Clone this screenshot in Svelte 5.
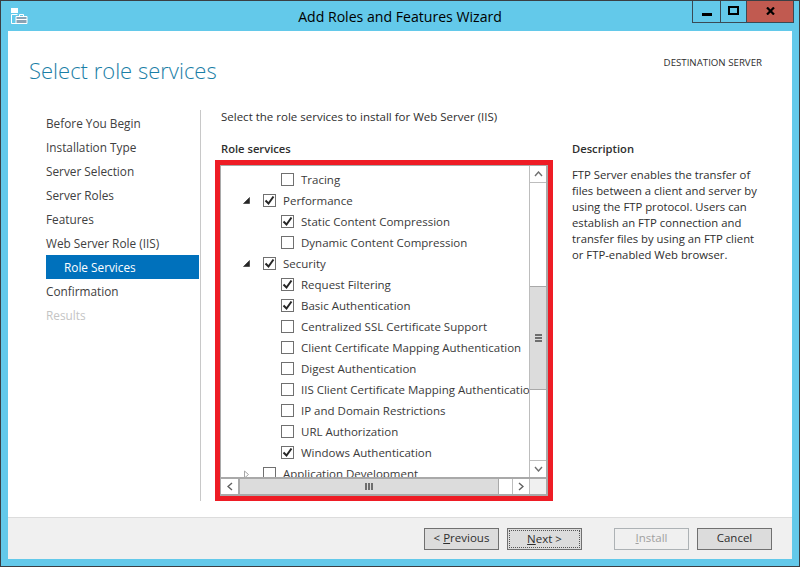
<script>
  const steps = [
    { label: 'Before You Begin' },
    { label: 'Installation Type' },
    { label: 'Server Selection' },
    { label: 'Server Roles' },
    { label: 'Features' },
    { label: 'Web Server Role (IIS)' },
    { label: 'Role Services', active: true },
    { label: 'Confirmation' },
    { label: 'Results', disabled: true }
  ];
  const rows = [
    { label: 'Tracing', level: 2 },
    { label: 'Performance', level: 1, checked: true, open: true },
    { label: 'Static Content Compression', level: 2, checked: true },
    { label: 'Dynamic Content Compression', level: 2 },
    { label: 'Security', level: 1, checked: true, open: true },
    { label: 'Request Filtering', level: 2, checked: true },
    { label: 'Basic Authentication', level: 2, checked: true },
    { label: 'Centralized SSL Certificate Support', level: 2 },
    { label: 'Client Certificate Mapping Authentication', level: 2 },
    { label: 'Digest Authentication', level: 2 },
    { label: 'IIS Client Certificate Mapping Authentication', level: 2 },
    { label: 'IP and Domain Restrictions', level: 2 },
    { label: 'URL Authorization', level: 2 },
    { label: 'Windows Authentication', level: 2, checked: true },
    { label: 'Application Development', level: 1, closed: true }
  ];
</script>

<div class="window">
  <header class="titlebar">
    <svg class="appicon" width="18" height="18" viewBox="0 0 18 18">
      <path d="M1 1h7v5H1z" fill="#fff"/>
      <path d="M1.5 7.5h6M1.5 7.5v9h5" fill="none" stroke="#fff"/>
      <path d="M6 9.5h11v7H6z" fill="#8aa3b5" stroke="#fff"/>
      <path d="M9.5 9V7.5h4V9" fill="none" stroke="#fff"/>
      <path d="M6 12.5h11" stroke="#fff"/>
    </svg>
    <div class="title">Add Roles and Features Wizard</div>
    <div class="controls">
      <div class="ctl min"><span></span></div>
      <div class="ctl max"><span></span></div>
      <div class="ctl close">
        <svg width="9" height="8" viewBox="0 0 9 8"><path d="M1 0.5l7 7M8 0.5l-7 7" stroke="#000" stroke-width="2.2" fill="none"/></svg>
      </div>
    </div>
  </header>

  <div class="client">
    <div class="head">
      <h1>Select role services</h1>
      <div class="dest">DESTINATION SERVER</div>
    </div>

    <div class="body">
      <nav class="steps">
        {#each steps as s}
          <div class="step" class:active={s.active} class:disabled={s.disabled}>{s.label}</div>
        {/each}
      </nav>

      <main class="main">
        <p class="lead">Select the role services to install for Web Server (IIS)</p>
        <div class="cols">
          <section class="left">
            <h2>Role services</h2>
            <div class="highlight">
              <div class="list">
                <div class="top">
                  <div class="tree">
                    {#each rows as r}
                      <div class="row" class:lv2={r.level === 2}>
                        {#if r.open}
                          <svg class="arrow" width="7" height="7" viewBox="0 0 7 7"><path d="M6.5 0.5v6h-6z" fill="#262626" stroke="#262626" stroke-width="0.6"/></svg>
                        {:else if r.closed}
                          <svg class="arrow" width="7" height="9" viewBox="0 0 7 9"><path d="M1.5 1l4 3.5-4 3.5z" fill="#fff" stroke="#a6a6a6"/></svg>
                        {/if}
                        <span class="box">
                          {#if r.checked}
                            <svg width="11" height="11" viewBox="0 0 11 11"><path d="M1.5 5.5l3 3 5-7" fill="none" stroke="#262626" stroke-width="2"/></svg>
                          {/if}
                        </span>
                        <span class="label">{r.label}</span>
                      </div>
                    {/each}
                  </div>
                  <div class="vscroll">
                    <div class="sbtn vb">
                      <svg width="9" height="6" viewBox="0 0 9 6"><path d="M1 5l3.5-4 3.5 4" fill="none" stroke="#707070" stroke-width="1.4"/></svg>
                    </div>
                    <div class="vtrack v1"></div>
                    <div class="vthumb"><span></span><span></span><span></span></div>
                    <div class="vtrack v2"></div>
                    <div class="sbtn vb vb2">
                      <svg width="9" height="6" viewBox="0 0 9 6"><path d="M1 1l3.5 4 3.5-4" fill="none" stroke="#707070" stroke-width="1.4"/></svg>
                    </div>
                  </div>
                </div>
                <div class="hscroll">
                  <div class="sbtn hb">
                    <svg width="6" height="9" viewBox="0 0 6 9"><path d="M5 1L1 4.5 5 8" fill="none" stroke="#606060" stroke-width="1.4"/></svg>
                  </div>
                  <div class="hthumb"><span></span><span></span><span></span></div>
                  <div class="htrack"></div>
                  <div class="sbtn hb hb2">
                    <svg width="6" height="9" viewBox="0 0 6 9"><path d="M1 1l4 3.5L1 8" fill="none" stroke="#606060" stroke-width="1.4"/></svg>
                  </div>
                  <div class="corner"></div>
                </div>
              </div>
            </div>
          </section>
          <aside class="desc">
            <h2>Description</h2>
            <p>FTP Server enables the transfer of files between a client and server by using the FTP protocol. Users can establish an FTP connection and transfer files by using an FTP client or FTP-enabled Web browser.</p>
          </aside>
        </div>
      </main>
    </div>

    <footer class="foot">
      <button class="btn">&lt; <u>P</u>revious</button>
      <button class="btn next"><span class="focus"><u>N</u>ext &gt;</span></button>
      <button class="btn install" disabled><u>I</u>nstall</button>
      <button class="btn cancel">Cancel</button>
    </footer>
  </div>
</div>

<style>
  :global(body) { margin: 0; }
  .window {
    box-sizing: border-box;
    width: 800px;
    height: 567px;
    display: flex;
    flex-direction: column;
    background: #63c9ea;
    border: 1px solid #3a3f44;
    padding: 0 7px 7px;
    font-family: "Open Sans", "Liberation Sans", sans-serif;
    font-size: 11.5px;
    color: #2e2e2e;
    overflow: hidden;
  }
  .titlebar {
    height: 30px;
    flex: none;
    display: flex;
    align-items: flex-start;
    position: relative;
    margin: 0 -7px;
  }
  .appicon { margin: 6px 0 0 9px; }
  .title {
    position: absolute;
    left: 0;
    right: 0;
    top: 6px;
    text-align: center;
    font-size: 14.1px;
    line-height: 19px;
    color: #000;
  }
  .controls {
    margin-left: auto;
    margin-right: 5px;
    display: flex;
    height: 21px;
    border: 1px solid #3a4a55;
    border-top: 0;
    position: relative;
  }
  .ctl { display: flex; align-items: center; justify-content: center; box-sizing: border-box; }
  .min { width: 28px; border-right: 1px solid #3a4a55; }
  .min span { width: 10px; height: 3px; background: #000; margin-top: 6px; }
  .max { width: 26px; border-right: 1px solid #3a4a55; }
  .max span { box-sizing: border-box; width: 11px; height: 9px; border: 2px solid #000; margin-top: -2px; }
  .close { width: 46px; background: #c15a50; }
  .close svg { margin-top: -2px; }

  .client {
    flex: 1;
    min-height: 0;
    background: #fff;
    display: flex;
    flex-direction: column;
  }
  .head {
    height: 79px;
    flex: none;
    display: flex;
    justify-content: space-between;
    align-items: flex-start;
  }
  h1 {
    margin: 22px 0 0 21px;
    font-size: 22px;
    line-height: 34px;
    font-weight: 300;
    color: #1a7ea6;
  }
  .dest {
    margin: 24px 30px 0 0;
    font-size: 9.7px;
    line-height: 16px;
    color: #2e2e2e;
  }
  .body { flex: 1; min-height: 0; display: flex; }
  .steps {
    width: 193px;
    height: 391px;
    box-sizing: border-box;
    flex: none;
    padding: 1px 0 0 38px;
    border-right: 1px solid #c8c8c8;
    font-size: 11.8px;
  }
  .step { height: 24px; line-height: 24px; color: #404040; margin-right: 1px; }
  .step.active { background: #0071bc; color: #fff; padding-left: 18px; }
  .step.disabled { color: #c4c4c4; }

  .main { flex: 1; padding-left: 20px; min-width: 0; }
  .lead { margin: -1px 0 0; line-height: 16px; height: 32px; }
  .cols { display: flex; }
  h2 { margin: 0; font-size: 11.2px; font-weight: 600; line-height: 16px; color: #2e2e2e; }
  .left { width: 351px; flex: none; }
  .highlight {
    margin: 3px 0 0 -6px;
    box-sizing: border-box;
    width: 338px;
    height: 341px;
    border: 5px solid #ee1c25;
    background: #fff;
  }
  .list {
    box-sizing: border-box;
    height: 331px;
    border: 2px solid #a9a9a9;
    border-top-width: 1px;
    border-left-width: 1px;
    display: flex;
    flex-direction: column;
    background: #fff;
  }
  .top { flex: 1; min-height: 0; display: flex; }
  .tree { flex: 1; min-width: 0; overflow: hidden; padding-top: 3px; }
  .row {
    position: relative;
    height: 21px;
    display: flex;
    align-items: center;
    padding-left: 42px;
    white-space: nowrap;
  }
  .row.lv2 { padding-left: 60px; }
  .arrow { position: absolute; left: 22px; top: 7px; }
  .box {
    box-sizing: border-box;
    width: 13px;
    height: 13px;
    border: 1px solid #707070;
    background: #fff;
    flex: none;
    margin-right: 7px;
    display: flex;
    align-items: center;
    justify-content: center;
  }
  .label { color: #3a3a3a; }

  .vscroll {
    width: 17px;
    flex: none;
    display: flex;
    flex-direction: column;
    box-sizing: border-box;
    border-left: 1px solid #bdbdbd;
    background: #fff;
  }
  .sbtn { display: flex; align-items: center; justify-content: center; flex: none; background: #fff; box-sizing: border-box; }
  .vb { height: 17px; border-bottom: 1px solid #bdbdbd; }
  .vb2 { border-bottom: 0; border-top: 1px solid #bdbdbd; }
  .v1 { height: 103px; flex: none; }
  .v2 { flex: 1; }
  .vthumb {
    height: 104px;
    flex: none;
    background: #dcdcdc;
    border-bottom: 1px solid #a9a9a9;
    border-top: 1px solid #a9a9a9;
    box-sizing: border-box;
    display: flex;
    flex-direction: column;
    align-items: center;
    justify-content: center;
    gap: 1px;
  }
  .vthumb span { width: 7px; height: 2px; background: #6e6e6e; }

  .hscroll {
    height: 17px;
    flex: none;
    display: flex;
    border-top: 2px solid #a9a9a9;
    box-sizing: border-box;
  }
  .hb { width: 17px; }
  .hb2 { border-left: 1px solid #bdbdbd; }
  .hthumb {
    width: 261px;
    flex: none;
    background: #dcdcdc;
    box-sizing: border-box;
    border-left: 2px solid #a9a9a9;
    border-right: 1px solid #a9a9a9;
    display: flex;
    align-items: center;
    justify-content: center;
    gap: 1px;
  }
  .hthumb span { width: 2px; height: 7px; background: #6e6e6e; }
  .htrack { flex: 1; background: #fff; }
  .corner { width: 17px; background: #f0f0f0; flex: none; border-left: 1px solid #bdbdbd; box-sizing: border-box; }

  .desc { flex: 1; padding-right: 27px; }
  .desc p { margin: 10px 0 0; line-height: 16px; color: #2e2e2e; font-size: 11.3px; }

  .foot {
    height: 42px;
    flex: none;
    box-sizing: border-box;
    border-top: 1px solid #dcdcdc;
    background: #f0f0f0;
    display: flex;
    align-items: flex-start;
    padding: 10px 20px 0 416px;
  }
  .btn {
    box-sizing: border-box;
    width: 75px;
    height: 22px;
    padding: 0 0 2px;
    border: 1px solid #707070;
    background: #dcdcdc;
    color: #2e2e2e;
    font: inherit;
    font-size: 11.5px;
    line-height: 18px;
  }
  .next { margin-left: 8px; padding: 1px; }
  .focus {
    display: block;
    height: 18px;
    box-sizing: border-box;
    border: 1px dotted #555;
    line-height: 15px;
  }
  .install { margin-left: 32px; background: #f0f0f0; color: #a0a0a0; border-color: #adb2b5; }
  .cancel { margin-left: 8px; }
</style>
